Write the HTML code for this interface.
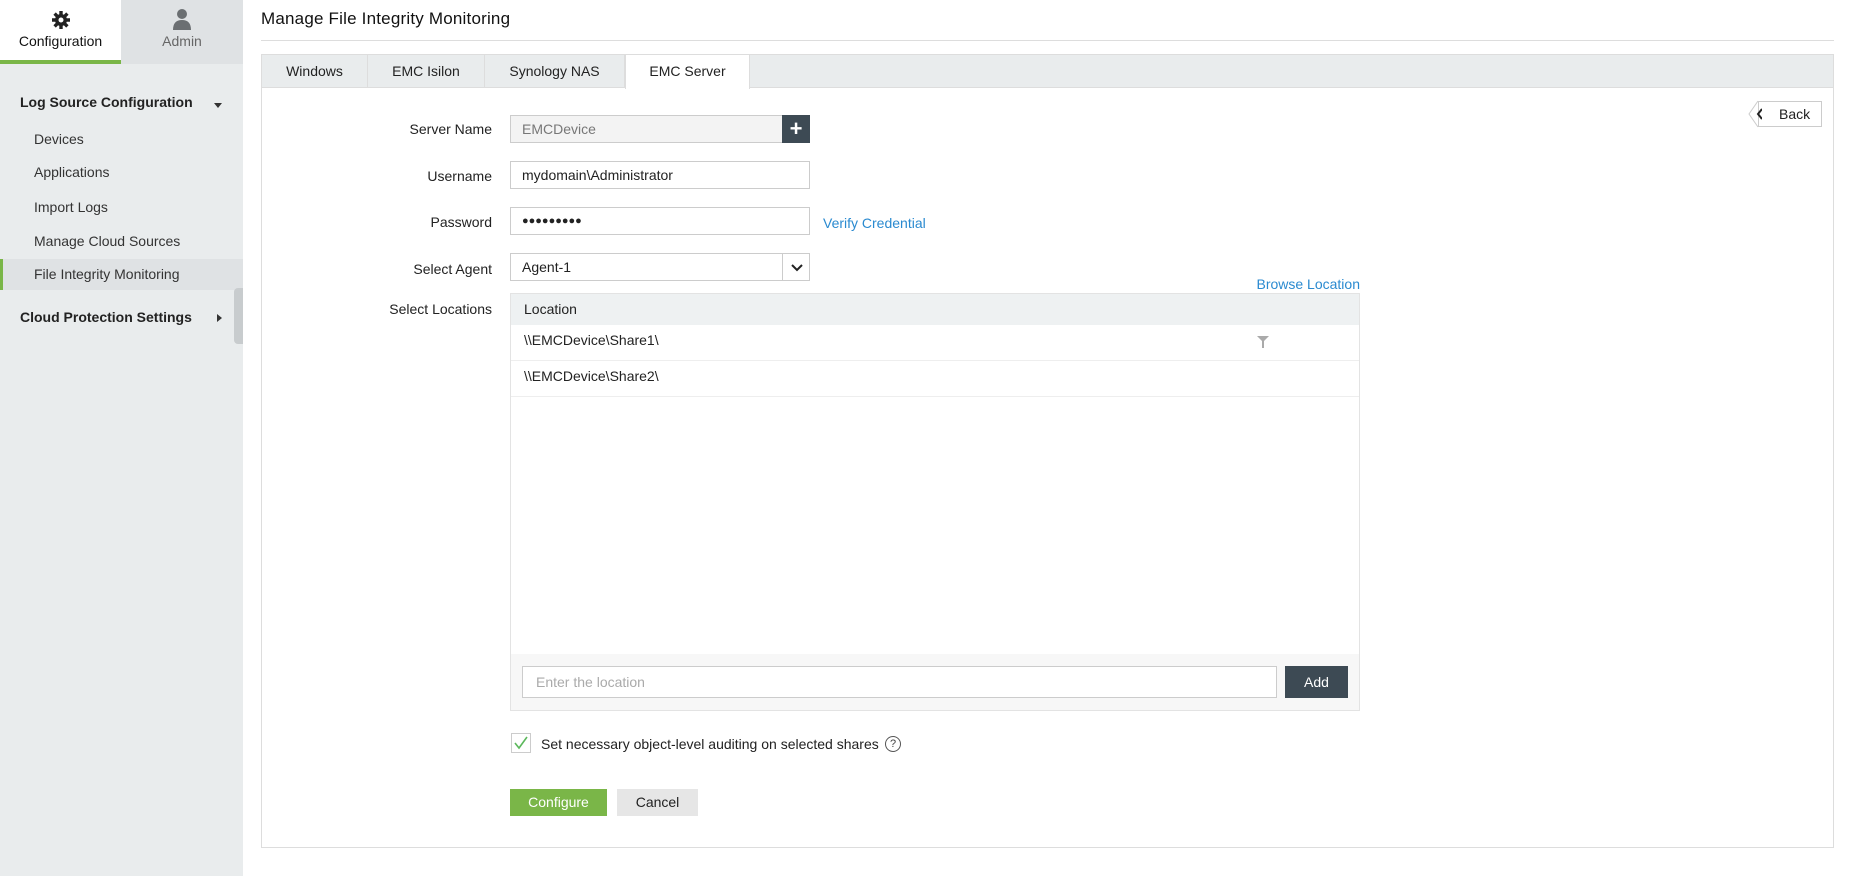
<!DOCTYPE html>
<html><head><meta charset="utf-8"><style>
*{box-sizing:border-box;margin:0;padding:0}
body{width:1854px;height:876px;position:relative;font-family:"Liberation Sans",sans-serif;font-size:14px;color:#222;background:#fff;overflow:hidden}
.abs{position:absolute;white-space:nowrap}
.side{left:0;top:0;width:243px;height:876px;background:#e9eced}
.lbl{position:absolute;width:200px;left:292px;text-align:right;font-size:14px;color:#222}
.inp{position:absolute;left:510px;width:300px;height:28px;border:1px solid #ccc;background:#fff;padding:0 11px;line-height:26px;font-size:14px}
</style></head><body>
<div class="abs side"></div>
<div class="abs" style="left:0;top:0;width:121px;height:64px;background:#fff;border-bottom:4px solid #7ab648"></div>
<div class="abs" style="left:121px;top:0;width:122px;height:64px;background:#dfe2e4"></div>
<svg class="abs" style="left:51px;top:10px" width="20" height="20" viewBox="0 0 20 20"><g fill="#222"><circle cx="10" cy="10" r="6"/><g stroke="#222" stroke-width="3.4"><line x1="10" y1="1" x2="10" y2="19"/><line x1="1" y1="10" x2="19" y2="10"/><line x1="3.6" y1="3.6" x2="16.4" y2="16.4"/><line x1="16.4" y1="3.6" x2="3.6" y2="16.4"/></g></g><circle cx="10" cy="10" r="2.5" fill="#fff"/></svg>
<div class="abs" style="left:0;top:33px;width:121px;text-align:center;font-size:14px;color:#111">Configuration</div>
<svg class="abs" style="left:172px;top:8px" width="20" height="22" viewBox="0 0 20 22"><circle cx="10" cy="6" r="5" fill="#6b6f72"/><path d="M1 22 Q1 12 10 12 Q19 12 19 22Z" fill="#6b6f72"/></svg>
<div class="abs" style="left:121px;top:33px;width:122px;text-align:center;font-size:14px;color:#666">Admin</div>
<div class="abs" style="left:20px;top:94px;font-size:14px;font-weight:bold;color:#222">Log Source Configuration</div>
<div class="abs" style="left:214px;top:103px;border-left:4px solid transparent;border-right:4px solid transparent;border-top:5px solid #333"></div>
<div class="abs" style="left:34px;top:131px;color:#333">Devices</div>
<div class="abs" style="left:34px;top:164px;color:#333">Applications</div>
<div class="abs" style="left:34px;top:199px;color:#333">Import Logs</div>
<div class="abs" style="left:34px;top:233px;color:#333">Manage Cloud Sources</div>
<div class="abs" style="left:0;top:259px;width:243px;height:31px;background:#dfe2e4;border-left:3px solid #7ab648"></div>
<div class="abs" style="left:34px;top:266px;color:#333">File Integrity Monitoring</div>
<div class="abs" style="left:20px;top:309px;font-size:14px;font-weight:bold;color:#222">Cloud Protection Settings</div>
<div class="abs" style="left:217px;top:314px;border-top:4px solid transparent;border-bottom:4px solid transparent;border-left:5px solid #333"></div>
<div class="abs" style="left:234px;top:288px;width:9px;height:56px;background:#c8ccce;border-radius:4px 0 0 4px"></div>

<div class="abs" style="left:261px;top:9px;font-size:17px;color:#111;letter-spacing:0.2px">Manage File Integrity Monitoring</div>
<div class="abs" style="left:261px;top:40px;width:1573px;height:1px;background:#ddd"></div>
<div class="abs" style="left:261px;top:54px;width:1573px;height:794px;border:1px solid #ddd"></div>
<div class="abs" style="left:262px;top:55px;width:1571px;height:33px;background:#e9eced;border-bottom:1px solid #ddd"></div>
<div class="abs" style="left:262px;top:55px;width:106px;height:33px;border-right:1px solid #ddd;text-align:center;line-height:32px">Windows</div>
<div class="abs" style="left:368px;top:55px;width:117px;height:33px;border-right:1px solid #ddd;text-align:center;line-height:32px">EMC Isilon</div>
<div class="abs" style="left:485px;top:55px;width:140px;height:33px;border-right:1px solid #ddd;text-align:center;line-height:32px">Synology NAS</div>
<div class="abs" style="left:625px;top:54px;width:125px;height:35px;background:#fff;border:1px solid #ddd;border-bottom:none;text-align:center;line-height:33px">EMC Server</div>

<div class="abs" style="left:1758px;top:101px;width:64px;height:26px;border:1px solid #ccc;background:#fff;line-height:24px;padding-left:20px">Back</div>
<svg class="abs" style="left:1748px;top:100px" width="14" height="28" viewBox="0 0 14 28"><path d="M10 1L1 14L10 27" fill="#fff" stroke="#ccc"/><path d="M14 9L10 14L14 19" fill="none" stroke="#222" stroke-width="2"/></svg>

<div class="lbl" style="top:121px">Server Name</div>
<div class="inp" style="top:115px;background:#f3f3f3;color:#777">EMCDevice</div>
<div class="abs" style="left:782px;top:115px;width:28px;height:28px;background:#3d4a54;color:#fff;text-align:center;font-size:22px;line-height:27px;font-weight:bold">+</div>
<div class="lbl" style="top:168px">Username</div>
<div class="inp" style="top:161px">mydomain\Administrator</div>
<div class="lbl" style="top:214px">Password</div>
<div class="inp" style="top:207px;font-size:11px">●●●●●●●●●</div>
<div class="abs" style="left:823px;top:215px;color:#2a8ad0">Verify Credential</div>
<div class="lbl" style="top:261px">Select Agent</div>
<div class="inp" style="top:253px">Agent-1</div>
<div class="abs" style="left:782px;top:253px;width:28px;height:28px;border-left:1px solid #ccc;text-align:center;line-height:28px"><svg width="12" height="8" viewBox="0 0 12 8"><path d="M1 1L6 6L11 1" fill="none" stroke="#222" stroke-width="2"/></svg></div>
<div class="abs" style="left:1200px;top:276px;color:#2a8ad0;width:160px;text-align:right">Browse Location</div>
<div class="lbl" style="top:301px">Select Locations</div>

<div class="abs" style="left:510px;top:293px;width:850px;height:418px;border:1px solid #e3e3e3;background:#fff"></div>
<div class="abs" style="left:511px;top:294px;width:848px;height:31px;background:#eef1f2;padding-left:13px;line-height:31px">Location</div>
<div class="abs" style="left:511px;top:325px;width:848px;height:36px;border-bottom:1px solid #eee;padding-left:13px;line-height:30px">\\EMCDevice\Share1\</div>
<svg class="abs" style="left:1257px;top:336px" width="12" height="12" viewBox="0 0 12 12"><path d="M0 0H12L7 5V12H5V5Z" fill="#aaa"/></svg>
<div class="abs" style="left:511px;top:361px;width:848px;height:36px;border-bottom:1px solid #eee;padding-left:13px;line-height:30px">\\EMCDevice\Share2\</div>
<div class="abs" style="left:511px;top:654px;width:848px;height:56px;background:#f7f7f7"></div>
<div class="abs" style="left:522px;top:666px;width:755px;height:32px;border:1px solid #ccc;background:#fff;padding-left:13px;line-height:30px;color:#aaa">Enter the location</div>
<div class="abs" style="left:1285px;top:666px;width:63px;height:32px;background:#3d4a54;color:#fff;text-align:center;line-height:32px">Add</div>

<div class="abs" style="left:511px;top:733px;width:20px;height:20px;border:1px solid #ccc;background:#fff"></div>
<svg class="abs" style="left:513px;top:735px" width="16" height="16" viewBox="0 0 16 16"><path d="M2 8L6 13L14 2" fill="none" stroke="#5cb85c" stroke-width="1.6"/></svg>
<div class="abs" style="left:541px;top:736px">Set necessary object-level auditing on selected shares</div>
<div class="abs" style="left:885px;top:736px;width:16px;height:16px;border:1px solid #555;border-radius:50%;font-size:11px;text-align:center;line-height:14px;color:#444">?</div>

<div class="abs" style="left:510px;top:789px;width:97px;height:27px;background:#7ab648;color:#fff;text-align:center;line-height:27px">Configure</div>
<div class="abs" style="left:617px;top:789px;width:81px;height:27px;background:#e6e6e6;text-align:center;line-height:27px">Cancel</div>
</body></html>
